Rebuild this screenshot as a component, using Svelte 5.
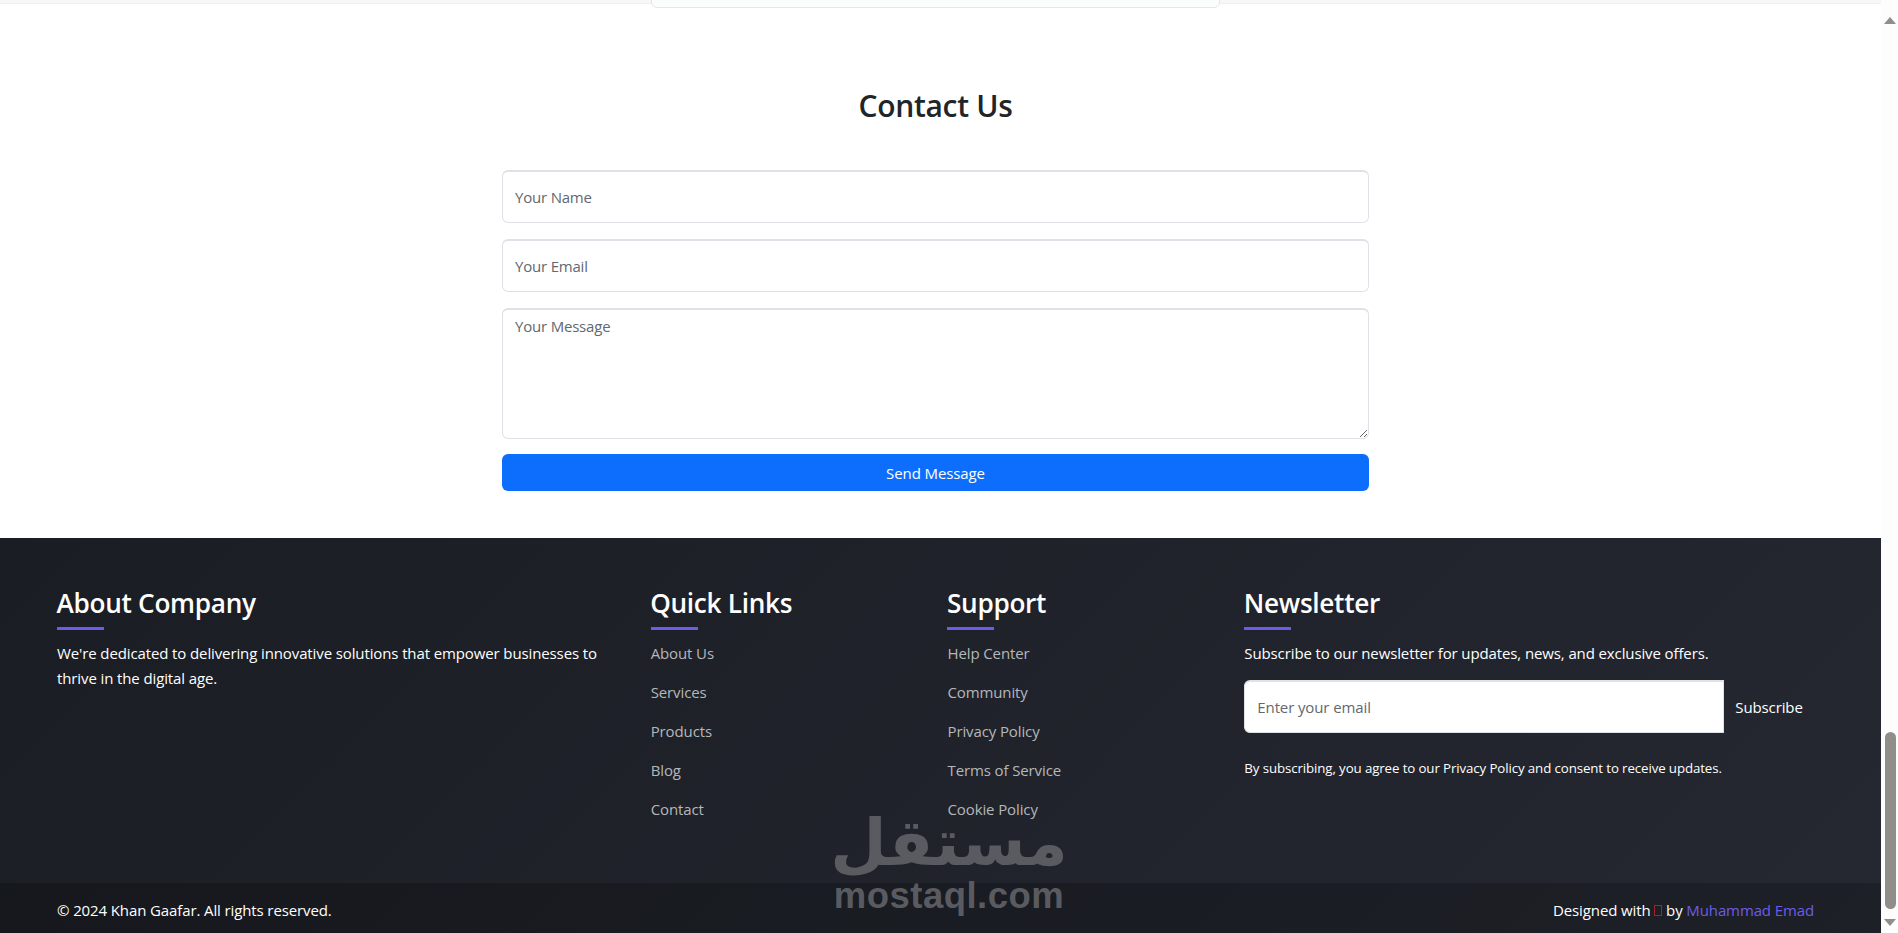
<script lang="ts">
    type Column = { title: string, links: Array<string> }

    const columns: Array<Column> = [
        { title: "Quick Links", links: ["About Us", "Services", "Products", "Blog", "Contact"] },
        { title: "Support", links: ["Help Center", "Community", "Privacy Policy", "Terms of Service", "Cookie Policy"] }
    ]
</script>

<div class="window">
    <div class="page">
        <div class="prev">
            <div class="prevCard"></div>
        </div>

        <section class="contact">
            <h2>Contact Us</h2>
            <form class="contactForm">
                <input type="text" placeholder="Your Name" />
                <input type="email" placeholder="Your Email" />
                <textarea placeholder="Your Message"></textarea>
                <button type="button" class="send">Send Message</button>
            </form>
        </section>

        <footer>
            <div class="footerMain">
                <div class="col wide">
                    <h4>About Company</h4>
                    <span class="bar"></span>
                    <p>We're dedicated to delivering innovative solutions that empower businesses to thrive in the digital age.</p>
                </div>
                {#each columns as column}
                    <div class="col narrow">
                        <h4>{column.title}</h4>
                        <span class="bar"></span>
                        <ul>
                            {#each column.links as link}
                                <li><a href="#top">{link}</a></li>
                            {/each}
                        </ul>
                    </div>
                {/each}
                <div class="col wide">
                    <h4>Newsletter</h4>
                    <span class="bar"></span>
                    <p>Subscribe to our newsletter for updates, news, and exclusive offers.</p>
                    <div class="subscribe">
                        <input type="email" placeholder="Enter your email" />
                        <button type="button">Subscribe</button>
                    </div>
                    <small>By subscribing, you agree to our Privacy Policy and consent to receive updates.</small>
                </div>
            </div>
            <div class="footerBottom">
                <span>© 2024 Khan Gaafar. All rights reserved.</span>
                <span>Designed with <i class="tofu"></i> by <a href="#top">Muhammad Emad</a></span>
            </div>
            <div class="watermark">
                <div class="arabic" dir="rtl">مستقل</div>
                <span>mostaql.com</span>
            </div>
        </footer>
    </div>

    <aside class="scrollbar">
        <span class="arrowUp"></span>
        <span class="thumb"></span>
        <span class="arrowDown"></span>
    </aside>
</div>

<style>
    :global(body) {
        margin: 0;
        overflow: hidden;
    }
    .window {
        display: flex;
        height: 933px;
        overflow: hidden;
        font-family: "Open Sans", "Noto Sans", sans-serif;
        font-size: 15px;
        letter-spacing: -0.115px;
        color: #212529;
        background: #fff;
    }
    .page {
        flex: 1;
        min-width: 0;
        display: flex;
        flex-direction: column;
    }
    .prev {
        position: relative;
        height: 4px;
        background: #f6f8f8;
        border-bottom: 1px solid #eef0f0;
        box-sizing: border-box;
    }
    .prevCard {
        position: absolute;
        left: 651px;
        width: 569px;
        top: -10px;
        height: 18px;
        box-sizing: border-box;
        background: #fbfcfc;
        border: 1px solid #e3e6e8;
        border-radius: 6px;
    }
    .contact {
        height: 534px;
        box-sizing: border-box;
        padding: 84px 10px 0 0;
        display: flex;
        flex-direction: column;
        align-items: center;
    }
    h2 {
        margin: 0 0 46px;
        font-size: 30px;
        line-height: 36px;
        font-weight: 600;
        letter-spacing: -0.3px;
    }
    .contactForm {
        width: 867px;
        display: flex;
        flex-direction: column;
        gap: 16px;
    }
    .contactForm input,
    .contactForm textarea {
        box-sizing: border-box;
        width: 100%;
        height: 53px;
        padding: 0 12px;
        border: 1px solid #dee2e6;
        border-top-width: 2px;
        border-radius: 6px;
        font: inherit;
        letter-spacing: -0.2px;
        background: #fff;
        outline: none;
    }
    .contactForm textarea {
        height: 131px;
        padding-top: 6px;
        display: block;
    }
    input::placeholder,
    textarea::placeholder {
        color: #62686e;
        opacity: 1;
    }
    .send {
        height: 37px;
        margin-top: -1px;
        border: none;
        border-radius: 6px;
        background: #0d6efd;
        color: #fff;
        font: inherit;
        letter-spacing: -0.1px;
    }
    footer {
        position: relative;
        flex: 1;
        display: flex;
        flex-direction: column;
        background: linear-gradient(135deg, #1a1d23, #252831);
        color: #fff;
    }
    .footerMain {
        flex: 1;
        display: grid;
        grid-template-columns: repeat(12, 1fr);
        column-gap: 24px;
        padding: 50px 67px 0 57px;
    }
    .col.wide {
        grid-column: span 4;
    }
    .col.narrow {
        grid-column: span 2;
    }
    h4 {
        margin: 0;
        font-size: 26.2px;
        line-height: 30px;
        font-weight: 600;
        letter-spacing: -0.3px;
        transform: translateX(-0.5px);
    }
    .bar {
        display: block;
        width: 47px;
        height: 3px;
        margin: 9px 0 11px;
        background: #6c5ce7;
    }
    p {
        margin: 0;
        line-height: 24.5px;
    }
    ul {
        list-style: none;
        margin: 0;
        padding: 0;
    }
    li {
        line-height: 24.5px;
        margin-bottom: 14.6px;
    }
    li a {
        color: #b4b7bb;
        text-decoration: none;
    }
    .subscribe {
        display: flex;
        margin: 14.5px 0 25px;
    }
    .subscribe input {
        flex: 1;
        min-width: 0;
        box-sizing: border-box;
        height: 53px;
        padding: 0 12px;
        border: 1px solid #dee2e6;
        border-top-width: 2px;
        border-radius: 6px 0 0 6px;
        font: inherit;
        letter-spacing: inherit;
        background: #fff;
    }
    .subscribe button {
        width: 90px;
        border: none;
        background: none;
        color: #fff;
        font: inherit;
        letter-spacing: inherit;
    }
    small {
        display: block;
        font-size: 13.3px;
        line-height: 21px;
    }
    .footerBottom {
        height: 50px;
        box-sizing: border-box;
        padding: 3px 67px 0 57px;
        display: flex;
        justify-content: space-between;
        align-items: center;
        background: rgba(0, 0, 0, 0.2);
    }
    .footerBottom a {
        color: #6c5ce7;
        text-decoration: none;
    }
    .tofu {
        display: inline-block;
        box-sizing: border-box;
        width: 8px;
        height: 11px;
        border: 1.5px solid #a3202e;
    }
    .watermark {
        position: absolute;
        left: 828px;
        top: 260px;
        width: 242px;
        display: flex;
        flex-direction: column;
        align-items: center;
        color: #5a5b60;
        pointer-events: none;
    }
    .arabic {
        height: 80px;
        line-height: 90px;
        font-family: "DejaVu Sans", sans-serif;
        font-weight: 700;
        font-size: 65px;
        letter-spacing: 0;
        white-space: nowrap;
    }
    .watermark span {
        font-family: "Liberation Sans", sans-serif;
        font-weight: 700;
        font-size: 36.5px;
        line-height: 36px;
        letter-spacing: 0.5px;
    }
    .scrollbar {
        position: relative;
        width: 17px;
        flex: none;
        background: #fdfdfd;
    }
    .arrowUp,
    .arrowDown {
        position: absolute;
        left: 3px;
        width: 0;
        height: 0;
        border-left: 6.5px solid transparent;
        border-right: 6.5px solid transparent;
    }
    .arrowUp {
        top: 17px;
        border-bottom: 7px solid #8f8e88;
    }
    .arrowDown {
        top: 919px;
        border-top: 7px solid #8f8e88;
    }
    .thumb {
        position: absolute;
        left: 4px;
        top: 732px;
        width: 11px;
        height: 177px;
        border-radius: 6px;
        background: #8f8e88;
    }
</style>
